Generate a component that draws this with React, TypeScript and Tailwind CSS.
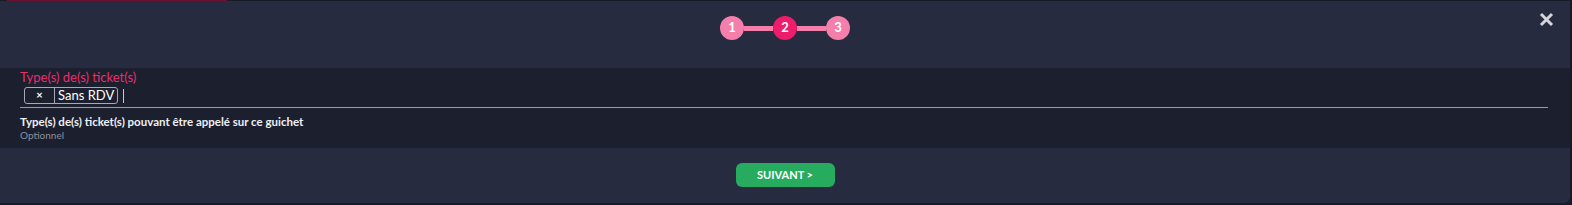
import React from "react";

const font = { fontFamily: '"Lato","Open Sans","Noto Sans",sans-serif' };

function Step({ n, active }: { n: number; active?: boolean }) {
  return (
    <div
      className={`flex h-[24px] w-[24px] items-center justify-center rounded-full text-[13px] font-bold text-white ${
        active ? "bg-[#ee1d6b]" : "bg-[#f47fab]"
      }`}
    >
      {n}
    </div>
  );
}

export default function App() {
  return (
    <div className="flex h-[205px] w-full flex-col bg-[#171b27]" style={font}>
      <div className="flex h-[1px] shrink-0">
        <div className="ml-[7px] w-[220px] bg-[#6b1233]" />
      </div>
      <div className="mr-[2px] flex h-[202px] flex-col overflow-hidden rounded-br-[6px] bg-[#262b40]">
        <header className="relative flex h-[67px] shrink-0 items-start justify-center pt-[15px]">
          <div className="flex items-center">
            <Step n={1} />
            <div className="h-[5px] w-[29px] bg-[#f47fab]" />
            <Step n={2} active />
            <div className="h-[5px] w-[29px] bg-[#f47fab]" />
            <Step n={3} />
          </div>
          <button type="button" className="absolute right-[16px] top-[11px] text-[#d4d6dc]">
            <svg width="15" height="15" viewBox="0 0 15 15">
              <path d="M2 2 L13 13 M13 2 L2 13" stroke="currentColor" strokeWidth="3" strokeLinecap="butt" />
            </svg>
          </button>
        </header>

        <section className="flex h-[80px] shrink-0 flex-col bg-[#1b1f2e] pl-[20px] pr-[22px] pt-[1px]">
          <label className="text-[13px] leading-[17px] text-[#ea2d6f]">Type(s) de(s) ticket(s)</label>
          <div className="flex h-[22px] items-center border-b border-[#9a9ca3] pl-[4px] pb-[2px]">
            <div className="flex h-[17px] items-stretch rounded-[3px] border border-[#a7a9b0] text-[13px] text-white">
              <span className="flex w-[30px] items-center justify-center border-r border-[#a7a9b0] text-[11px] font-bold">×</span>
              <span className="flex items-center px-[3px] leading-none">Sans RDV</span>
            </div>
            <div className="ml-[5px] h-[14px] w-[1px] bg-[#c9cacf]" />
          </div>
          <p className="mt-[6px] text-[11.5px] font-bold leading-[15px] text-[#eef0f4]">
            Type(s) de(s) ticket(s) pouvant être appelé sur ce guichet
          </p>
          <p className="text-[10px] leading-[13px] text-[#8b8f9b]">Optionnel</p>
        </section>

        <footer className="flex flex-1 items-start justify-center pt-[15px]">
          <button
            type="button"
            className="flex h-[24px] w-[99px] items-center justify-center rounded-[6px] bg-[#27ab5f] text-[11px] font-bold text-white"
          >
            SUIVANT &gt;
          </button>
        </footer>
      </div>
    </div>
  );
}
